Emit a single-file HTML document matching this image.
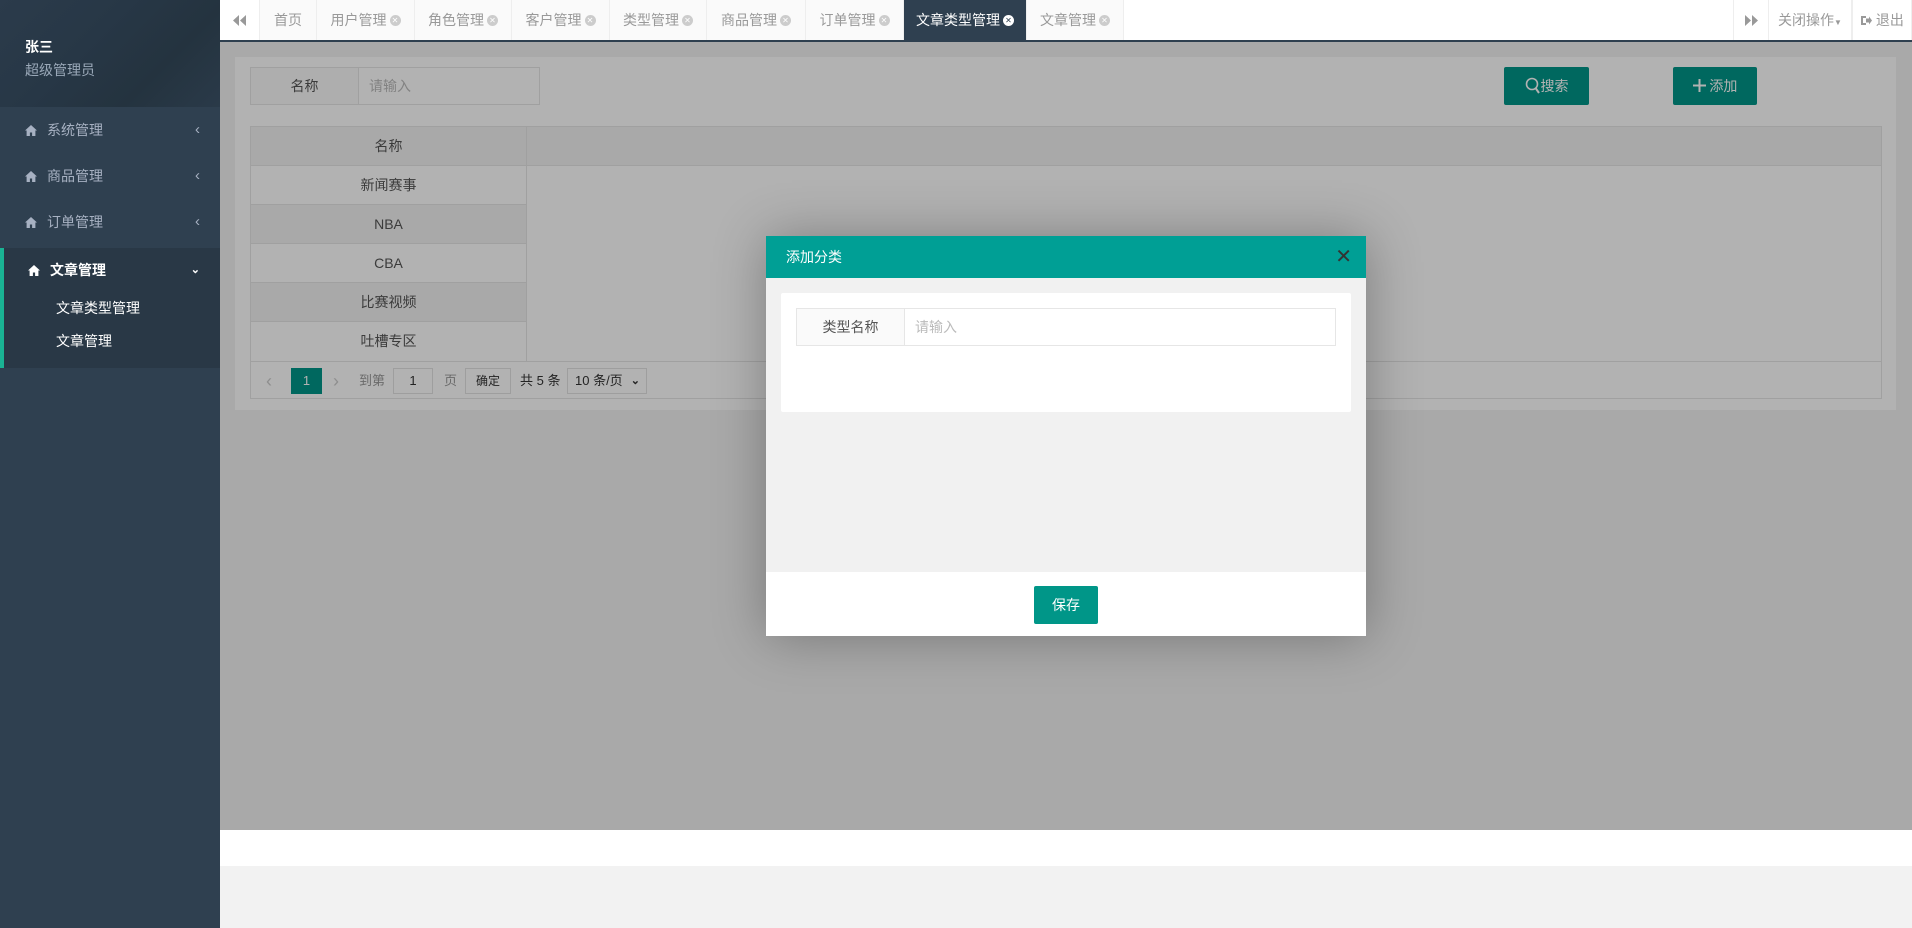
<!DOCTYPE html>
<html><head><meta charset="utf-8"><style>
*{box-sizing:border-box;margin:0;padding:0}
body{width:1912px;height:928px;overflow:hidden;position:relative;font-family:"Liberation Sans","Noto Sans CJK SC",sans-serif;font-size:14px;color:#666;background:#f2f2f2}
.side{position:absolute;left:0;top:0;width:220px;height:928px;background:#2f4050}
.sh{height:107px;background:linear-gradient(135deg,#2b3b4b 0%,#273746 40%,#24333f 70%,#2a3a49 100%);padding:37px 0 0 25px}
.sh b{display:block;color:#fff;font-size:14px}
.sh span{display:block;color:#9aa8b8;font-size:14px;margin-top:3px}
.mi{height:46px;line-height:46px;padding-left:25px;color:#a7b1c2;font-size:14px;position:relative}
.hi{display:inline-block;width:12px;height:11px;margin-right:10px;vertical-align:-1px}
.mi .ar{position:absolute;right:20px;top:0;font-size:15px}
.act{position:absolute;top:248px;left:0;width:220px;height:120px;background:#293846;border-left:4px solid #1ab394}
.act .t{color:#fff;font-weight:bold;padding-left:24px;height:44px;line-height:44px;position:relative}
.act .s{color:#fff;padding-left:52px;height:33px;line-height:33px;font-size:14px}
.top{position:absolute;left:220px;top:0;width:1692px;height:42px;background:#fff;border-bottom:2px solid #2f4050}
.tab{position:absolute;top:0;height:40px;line-height:40px;border-right:1px solid #eee;text-align:center;color:#999;font-size:14px;background:#fafafa}
.tab .x{display:inline-block;width:11px;height:11px;border-radius:50%;background:#ccc;color:#fff;font-size:8px;line-height:11px;vertical-align:middle;margin-left:3px;margin-top:-2px}
.tab.on{background:#2f4050;color:#fff}
.tab.on .x{background:#fff;color:#2f4050}
.content{position:absolute;left:220px;top:42px;width:1692px;height:788px;background:#f2f2f2}
.panel{position:absolute;left:15px;top:15px;width:1661px;height:353px;background:#fff}
.ig{position:absolute;border:1px solid #e6e6e6;background:#fff;height:38px}
.ig .l{position:absolute;left:0;top:0;height:36px;line-height:36px;text-align:center;background:#fafafa;border-right:1px solid #e6e6e6;color:#555}
.ig .p{position:absolute;top:0;height:36px;line-height:36px;color:#bbb}
.btn{position:absolute;background:#009688;color:#fff;text-align:center;border-radius:2px}
.tbl{position:absolute;left:15px;top:69px;width:1632px;height:273px;border:1px solid #e6e6e6}
.row{position:absolute;left:0;width:276px;height:39px;line-height:39px;text-align:center;border-bottom:1px solid #e6e6e6;border-right:1px solid #e6e6e6;color:#555}
.pg{position:absolute;left:0;top:234px;width:1630px;height:38px;border-top:1px solid #e6e6e6;font-size:13px;color:#666}
.pg span{position:absolute;top:0;line-height:38px}
.pg .bx{position:absolute;top:6px;height:26px;border:1px solid #e2e2e2;line-height:24px;text-align:center;background:#fff;color:#333}
.ov{position:absolute;left:220px;top:42px;width:1692px;height:788px;background:rgba(0,0,0,0.3)}
.white{position:absolute;left:220px;top:830px;width:1692px;height:36px;background:#fff}
.modal{position:absolute;left:766px;top:236px;width:600px;height:400px;background:#f1f1f1;box-shadow:1px 1px 50px rgba(0,0,0,.3)}
.mh{height:42px;background:#009f95;color:#fff;line-height:42px;padding-left:20px;font-size:14px;position:relative}
.mh .c{position:absolute;right:14px;top:0;color:#333;font-size:20px;font-weight:300}
.card{position:absolute;left:15px;top:57px;width:570px;height:119px;background:#fff;border-radius:2px}
.mf{position:absolute;left:0;bottom:0;width:600px;height:64px;background:#fff}
</style></head><body>
<svg width="0" height="0" style="position:absolute"><defs><symbol id="h" viewBox="0 0 12 11"><path d="M6 0L0 5.5h1.6V11h3.3V7.5h2.2V11h3.3V5.5H12z" fill="currentColor"/></symbol></defs></svg>
<div class="side">
 <div class="sh"><b>张三</b><span>超级管理员</span></div>
 <div class="mi"><svg class="hi"><use href="#h"/></svg>系统管理<span class="ar">&lsaquo;</span></div>
 <div class="mi"><svg class="hi"><use href="#h"/></svg>商品管理<span class="ar">&lsaquo;</span></div>
 <div class="mi"><svg class="hi"><use href="#h"/></svg>订单管理<span class="ar">&lsaquo;</span></div>
 <div class="act"><div class="t"><svg class="hi"><use href="#h"/></svg>文章管理<span style="position:absolute;right:20px;font-size:11px">&#8964;</span></div>
  <div class="s">文章类型管理</div><div class="s">文章管理</div></div>
</div>
<div class="top">
 <div class="tab" style="left:0;width:40px;background:#fff"><svg width="13" height="11" viewBox="0 0 13 11" style="vertical-align:-1px"><path d="M6 0v11L0 5.5zM13 0v11L7 5.5z" fill="#999"/></svg></div>
 <div class="tab" style="left:40px;width:57px">首页</div>
 <div class="tab" style="left:97px;width:98px">用户管理<span class="x">✕</span></div>
 <div class="tab" style="left:195px;width:97px">角色管理<span class="x">✕</span></div>
 <div class="tab" style="left:292px;width:98px">客户管理<span class="x">✕</span></div>
 <div class="tab" style="left:390px;width:97px">类型管理<span class="x">✕</span></div>
 <div class="tab" style="left:487px;width:99px">商品管理<span class="x">✕</span></div>
 <div class="tab" style="left:586px;width:98px">订单管理<span class="x">✕</span></div>
 <div class="tab on" style="left:684px;width:123px">文章类型管理<span class="x">✕</span></div>
 <div class="tab" style="left:807px;width:97px">文章管理<span class="x">✕</span></div>
 <div class="tab" style="left:1513px;width:36px;background:#fff;border-left:1px solid #eee"><svg width="13" height="11" viewBox="0 0 13 11" style="vertical-align:-1px"><path d="M0 0v11l6-5.5zM7 0v11l6-5.5z" fill="#999"/></svg></div>
 <div class="tab" style="left:1549px;width:83px;background:#fff">关闭操作<span style="font-size:8px">▼</span></div>
 <div class="tab" style="left:1632px;width:60px;background:#fff;border-left:1px solid #eee"><svg width="12" height="11" viewBox="0 0 12 11" style="vertical-align:-1px"><path d="M1 1h5v2H3v5h3v2H1z M6 3.5h3V1.5l3 4-3 4V7.5H6z" fill="#999"/></svg> 退出</div>
</div>
<div class="content">
 <div class="panel">
  <div class="ig" style="left:15px;top:10px;width:290px"><div class="l" style="width:108px">名称</div><div class="p" style="left:118px">请输入</div></div>
  <div class="btn" style="left:1269px;top:10px;width:85px;height:38px;line-height:38px"><svg width="16" height="17" viewBox="0 0 16 17" style="vertical-align:-3px"><circle cx="7" cy="7" r="5.5" stroke="#fff" stroke-width="1.6" fill="none"/><path d="M10.5 11l3.5 5" stroke="#fff" stroke-width="2"/></svg>搜索</div>
  <div class="btn" style="left:1438px;top:10px;width:84px;height:38px;line-height:38px"><svg width="13" height="13" viewBox="0 0 13 13" style="vertical-align:-1px"><path d="M5.5 0h2v13h-2zM0 5.5h13v2H0z" fill="#fff"/></svg> 添加</div>
  <div class="tbl">
   <div style="position:absolute;left:0;top:0;width:1630px;height:39px;background:#f2f2f2;border-bottom:1px solid #e6e6e6"></div>
   <div class="row" style="top:0;background:#f2f2f2">名称</div>
   <div class="row" style="top:39px">新闻赛事</div>
   <div class="row" style="top:78px;background:#f2f2f2">NBA</div>
   <div class="row" style="top:117px">CBA</div>
   <div class="row" style="top:156px;background:#f2f2f2">比赛视频</div>
   <div class="row" style="top:195px;height:39px;border-bottom:none">吐槽专区</div>
   <div class="pg">
    <span style="left:15px;color:#ccc;font-size:18px">&lsaquo;</span>
    <div class="bx" style="left:40px;width:31px;background:#009688;color:#fff;border-color:#009688">1</div>
    <span style="left:82px;color:#ccc;font-size:18px">&rsaquo;</span>
    <span style="left:108px;color:#999">到第</span>
    <div class="bx" style="left:142px;width:40px">1</div>
    <span style="left:193px;color:#999">页</span>
    <div class="bx" style="left:214px;width:46px;font-size:12px">确定</div>
    <span style="left:269px;color:#333">共 5 条</span>
    <div class="bx" style="left:316px;width:80px;text-align:left;padding-left:7px">10 条/页 <b style="float:right;margin-right:6px;font-size:11px">&#8964;</b></div>
   </div>
  </div>
 </div>
</div>
<div class="ov"></div>
<div class="white"></div>
<div class="modal">
 <div class="mh">添加分类<span class="c">✕</span></div>
 <div class="card">
  <div class="ig" style="left:15px;top:15px;width:540px"><div class="l" style="width:108px">类型名称</div><div class="p" style="left:118px">请输入</div></div>
 </div>
 <div class="mf"><div class="btn" style="left:268px;top:14px;width:64px;height:38px;line-height:38px">保存</div></div>
</div>
</body></html>
